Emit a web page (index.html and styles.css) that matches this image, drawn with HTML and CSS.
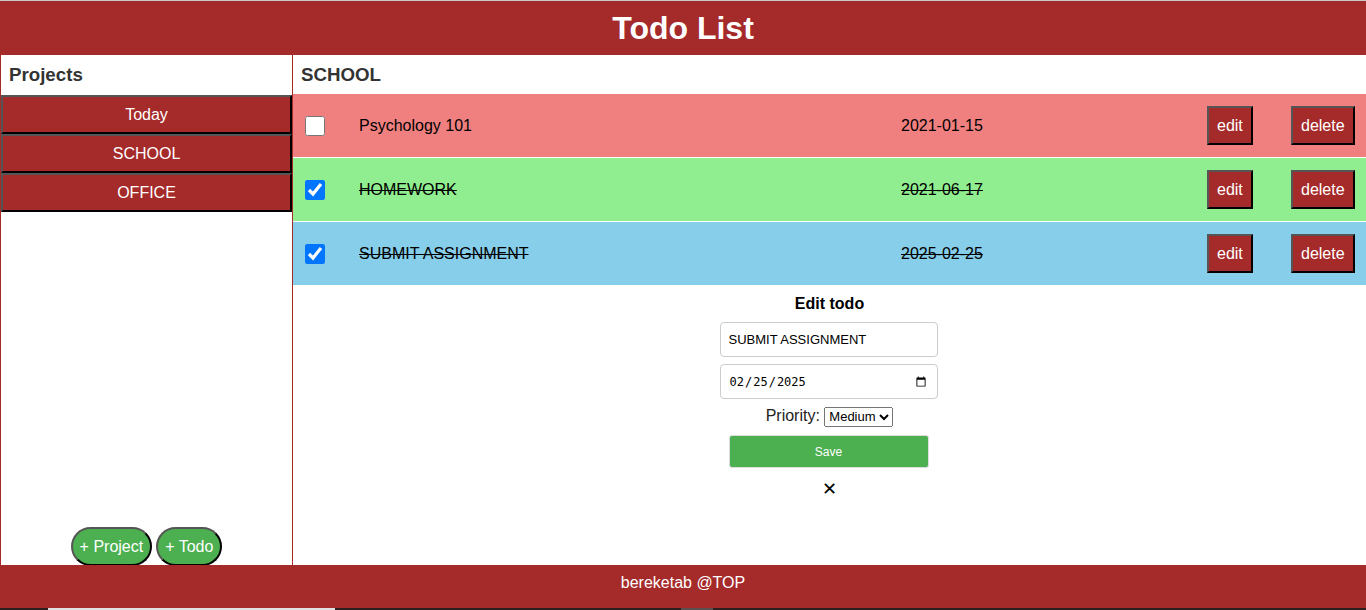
FILE: index.html
```html
<!DOCTYPE html>
<html>
<head>
<meta charset="utf-8">
<title>Todo List</title>
<link rel="stylesheet" href="styles.css">
</head>
<body>
<header class="header"><h1 class="title">Todo List</h1></header>
<div class="middle">
  <aside class="sidebar">
    <h3 class="side-heading">Projects</h3>
    <div class="project-list">
      <button class="project-btn">Today</button>
      <button class="project-btn">SCHOOL</button>
      <button class="project-btn">OFFICE</button>
    </div>
    <div class="side-actions">
      <button class="pill-btn">+ Project</button>
      <button class="pill-btn">+ Todo</button>
    </div>
  </aside>
  <main class="main">
    <h3 class="main-heading">SCHOOL</h3>
    <div class="todo todo-high">
      <input type="checkbox" class="todo-check">
      <span class="todo-title">Psychology 101</span>
      <span class="todo-date">2021-01-15</span>
      <button class="row-btn">edit</button>
      <button class="row-btn">delete</button>
    </div>
    <div class="todo todo-low">
      <input type="checkbox" class="todo-check" checked>
      <span class="todo-title done">HOMEWORK</span>
      <span class="todo-date done">2021-06-17</span>
      <button class="row-btn">edit</button>
      <button class="row-btn">delete</button>
    </div>
    <div class="todo todo-medium">
      <input type="checkbox" class="todo-check" checked>
      <span class="todo-title done">SUBMIT ASSIGNMENT</span>
      <span class="todo-date done">2025-02-25</span>
      <button class="row-btn">edit</button>
      <button class="row-btn">delete</button>
    </div>
    <form class="edit-form">
      <h4 class="edit-heading">Edit todo</h4>
      <input type="text" class="field" value="SUBMIT ASSIGNMENT">
      <input type="date" class="field field-date" value="2025-02-25">
      <label class="priority">Priority: <select class="priority-select"><option>Low</option><option selected>Medium</option><option>High</option></select></label>
      <button type="button" class="save-btn">Save</button>
      <span class="close">✕</span>
    </form>
  </main>
</div>
<footer class="footer">bereketab @TOP</footer>
<div class="hscroll"><span class="thumb thumb-a"></span><span class="thumb thumb-b"></span></div>
</body>
</html>
```
FILE: styles.css
```css
html, body {
  margin: 0;
  padding: 0;
}
body {
  font-family: "Liberation Sans", Arial, sans-serif;
  width: 1366px;
  height: 610px;
  overflow: hidden;
  background: #fff;
  display: flex;
  flex-direction: column;
}
.header {
  height: 55px;
  background: #a52a2a;
  border-top: 1px solid #c9c9c9;
  box-sizing: border-box;
  display: flex;
  align-items: center;
  justify-content: center;
}
.title {
  margin: 0;
  color: #fff;
  font-size: 32px;
  font-weight: bold;
}
.middle {
  height: 510px;
  display: flex;
}
.sidebar {
  width: 293px;
  box-sizing: border-box;
  border-left: 1px solid #a52a2a;
  border-right: 1px solid #a52a2a;
  display: flex;
  flex-direction: column;
}
.side-heading {
  margin: 0;
  height: 40px;
  line-height: 40px;
  padding-left: 8px;
  font-size: 18.72px;
  color: #333;
}
.project-list {
  display: flex;
  flex-direction: column;
}
.project-btn {
  height: 39px;
  background: #a52a2a;
  color: #fff;
  font-family: inherit;
  font-size: 16px;
  border: 2px solid;
  border-color: #555 #000 #000 #555;
  padding: 0;
}
.side-actions {
  margin-top: auto;
  margin-bottom: -1px;
  display: flex;
  justify-content: center;
  gap: 4px;
}
.pill-btn {
  height: 39px;
  padding: 0 7px;
  border-radius: 20px;
  background: #4caf50;
  color: #fff;
  font-family: inherit;
  font-size: 16px;
  border: 2px solid;
  border-color: #555 #000 #000 #555;
}
.main {
  flex: 1;
  display: flex;
  flex-direction: column;
}
.main-heading {
  margin: 0;
  height: 39px;
  line-height: 39px;
  padding-left: 8px;
  font-size: 18.72px;
  color: #333;
}
.todo {
  height: 63px;
  margin-bottom: 1px;
  display: grid;
  grid-template-columns: 54px 542px 306px 84px 63px;
  align-items: center;
  padding: 0 12px;
  font-size: 16px;
  color: #000;
}
.todo-high { background: #f08080; }
.todo-low { background: #90ee90; }
.todo-medium { background: #87ceeb; }
.todo-check {
  width: 20px;
  height: 20px;
  margin: 0;
}
.done { text-decoration: line-through; }
.row-btn {
  height: 39px;
  background: #a52a2a;
  color: #fff;
  font-family: inherit;
  font-size: 16px;
  border: 2px solid;
  border-color: #555 #000 #000 #555;
  padding: 0 8px;
  justify-self: start;
}
.edit-form {
  display: flex;
  flex-direction: column;
  align-items: center;
  margin-top: 8px;
}
.edit-heading {
  margin: 0 0 9px;
  font-size: 16px;
  line-height: 19px;
  color: #000;
}
.field {
  width: 218px;
  height: 35px;
  box-sizing: border-box;
  border: 1px solid #ccc;
  border-radius: 4px;
  padding: 0 8px;
  font-family: inherit;
  font-size: 13px;
  margin-bottom: 7px;
  margin-right: 2px;
}
.field-date {
  font-family: "DejaVu Sans Mono", monospace;
  font-size: 12px;
  margin-bottom: 6px;
}
.priority {
  font-size: 16px;
  color: #222;
  height: 22px;
  line-height: 22px;
  margin-bottom: 8px;
}
.priority-select {
  font-family: inherit;
  font-size: 13px;
  height: 20px;
}
.save-btn {
  width: 200px;
  height: 33px;
  background: #4caf50;
  color: #fff;
  border: 1px solid #ddd;
  border-radius: 3px;
  font-family: inherit;
  font-size: 12px;
  margin-bottom: 10px;
  margin-right: 2px;
}
.close {
  font-size: 18px;
  font-weight: bold;
  font-family: "DejaVu Sans", sans-serif;
  line-height: 22px;
}
.footer {
  height: 43px;
  background: #a52a2a;
  color: #fff;
  font-size: 16px;
  display: flex;
  justify-content: center;
  padding-top: 9px;
  box-sizing: border-box;
}
.hscroll {
  height: 2px;
  background: #2e1f1f;
  position: relative;
}
.thumb {
  position: absolute;
  top: 0;
  height: 2px;
}
.thumb-a { left: 48px; width: 287px; background: #e0e0e0; }
.thumb-b { left: 681px; width: 32px; background: #5a5050; }
```
